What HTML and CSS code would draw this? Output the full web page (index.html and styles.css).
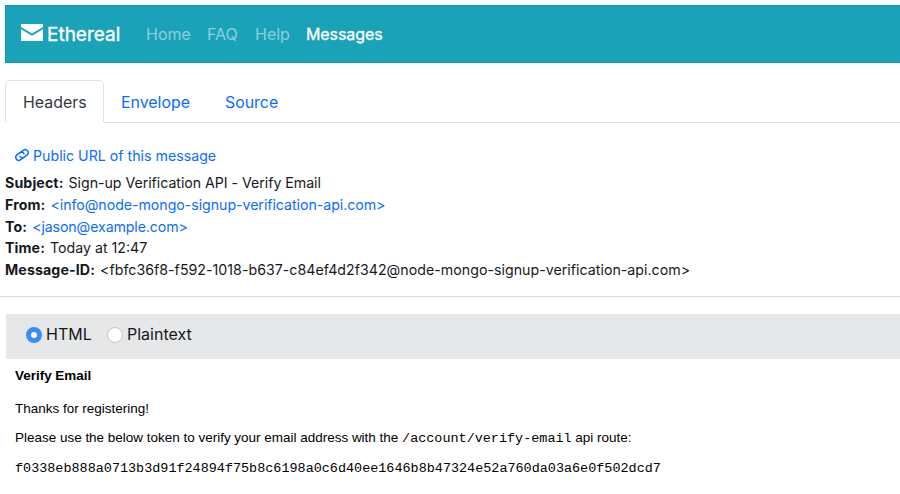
FILE: index.html
```html
<!DOCTYPE html>
<html lang="en">
<head>
<meta charset="utf-8">
<title>Ethereal</title>
<link rel="stylesheet" href="styles.css">
</head>
<body>
<nav class="navbar">
  <a class="brand"><svg class="envelope" viewBox="0 0 22 18"><path d="M0 0H22V3L11 9.5L0 3Z"/><path d="M0 5.2L11 11.7L22 5.2V17H0Z"/></svg><span>Ethereal</span></a>
  <a class="nav-item home">Home</a>
  <a class="nav-item faq">FAQ</a>
  <a class="nav-item help">Help</a>
  <a class="nav-item active">Messages</a>
</nav>
<div class="tabs">
  <a class="tab current">Headers</a>
  <a class="tab envelope-tab">Envelope</a>
  <a class="tab">Source</a>
</div>
<section class="headers">
  <a class="public link"><svg class="chain" viewBox="0 0 16 16"><g transform="rotate(-38 8 8)"><path d="M7.5 10.9H4.1A3 3 0 0 1 4.1 4.9H7.6A3 3 0 0 1 10.4 8.2"/><path d="M8.5 5.1H11.9A3 3 0 0 1 11.9 11.1H8.4A3 3 0 0 1 5.6 7.8"/></g></svg><span>Public URL of this message</span></a>
  <div class="row"><b>Subject:</b> <span class="subject">Sign-up Verification API - Verify Email</span></div>
  <div class="row"><b>From:</b> <a class="link from">&lt;info@node-mongo-signup-verification-api.com&gt;</a></div>
  <div class="row"><b>To:</b> <a class="link to">&lt;jason@example.com&gt;</a></div>
  <div class="row"><b>Time:</b> <span class="time">Today at 12:47</span></div>
  <div class="row"><b>Message-ID:</b> <span class="message-id">&lt;fbfc36f8-f592-1018-b637-c84ef4d2f342@node-mongo-signup-verification-api.com&gt;</span></div>
</section>
<div class="format-bar">
  <label class="option html"><span class="radio checked"></span><span>HTML</span></label>
  <label class="option plain"><span class="radio"></span><span>Plaintext</span></label>
</div>
<article class="mail">
  <h4>Verify Email</h4>
  <p>Thanks for registering!</p>
  <p>Please use the below token to verify your email address with the <code>/account/verify-email</code> api route:</p>
  <p><code>f0338eb888a0713b3d91f24894f75b8c6198a0c6d40ee1646b8b47324e52a760da03a6e0f502dcd7</code></p>
</article>
</body>
</html>
```
FILE: styles.css
```css
* { box-sizing: border-box; }
body { margin: 0; padding-top: 5px; height: 494px; overflow: hidden; background: #fff; color: #16191c; font-family: Inter, "Liberation Sans", sans-serif; }
.navbar { height: 58px; margin-left: 5px; padding-left: 16px; background: #19a2b8; border: solid #0b9ab2; border-width: 1px 0 1px 1px; display: flex; align-items: center; color: #fff; }
.brand { display: flex; align-items: center; width: 124px; font-size: 19px; line-height: 30px; padding-top: 1px; -webkit-text-stroke: .35px; }
.envelope { width: 22px; height: 18px; margin: -4px 4px 0 -1px; fill: #fff; }
.nav-item { font-size: 16px; color: rgba(255,255,255,.5); }
.home { width: 61px; }
.faq { width: 48px; }
.help { width: 51px; }
.active { color: #fff; letter-spacing: -.09px; -webkit-text-stroke: .3px; }
.tabs { display: flex; height: 43px; margin: 17px 0 0 5px; border-bottom: 1px solid #dee2e6; }
.tab { height: 43px; line-height: 45px; font-size: 15.9px; color: #0a6cff; }
.current { width: 99px; height: 42px; flex: none; padding-left: 17px; margin-right: 17px; border: 1px solid #dee2e6; border-bottom: 0; border-radius: 5px 5px 0 0; box-shadow: 0 1px #fff; color: #343a40; line-height: 43px; }
.envelope-tab { width: 104px; }
.link { color: #0a6cff; }
.headers { height: 174px; padding: 22px 0 0 5px; border-bottom: 1px solid #d9d9d9; font-size: 14.2px; line-height: 21.8px; }
.public { display: flex; align-items: center; height: 22px; margin: 0 0 5px 9px; }
.chain { width: 16px; height: 16px; margin: -3px 3px 0 0; fill: none; stroke: #0a6cff; stroke-width: 1.5; stroke-linecap: round; }
.row { white-space: nowrap; height: 21.8px; }
.row b { margin-right: 1px; font-weight: 700; letter-spacing: .11px; }
.subject { letter-spacing: -.04px; }
.from { letter-spacing: -.05px; }
.to { letter-spacing: -.12px; }
.message-id { letter-spacing: .02px; }
.format-bar { display: flex; height: 45px; margin: 17px 0 0 6px; padding: 0 0 5px 20px; background: #e6e7e9; align-items: center; font-size: 16px; }
.option { display: flex; align-items: center; gap: 4px; }
.html { width: 81px; }
.radio { width: 16px; height: 16px; margin-top: 2px; border: 1px solid #c3c4c6; border-radius: 50%; background: #fff; }
.checked { border: 5px solid #3b8bfc; }
.mail { padding: 8px 0 0 15px; font: 13.48px/17px "Liberation Sans", sans-serif; color: #000; }
.mail h4 { margin: 0 0 16px; font-size: 13.45px; line-height: 17px; }
.mail p { height: 17px; margin: 0 0 12.3px; white-space: nowrap; }
.mail code { font: 13.46px/17px "Liberation Mono", monospace; }
```
